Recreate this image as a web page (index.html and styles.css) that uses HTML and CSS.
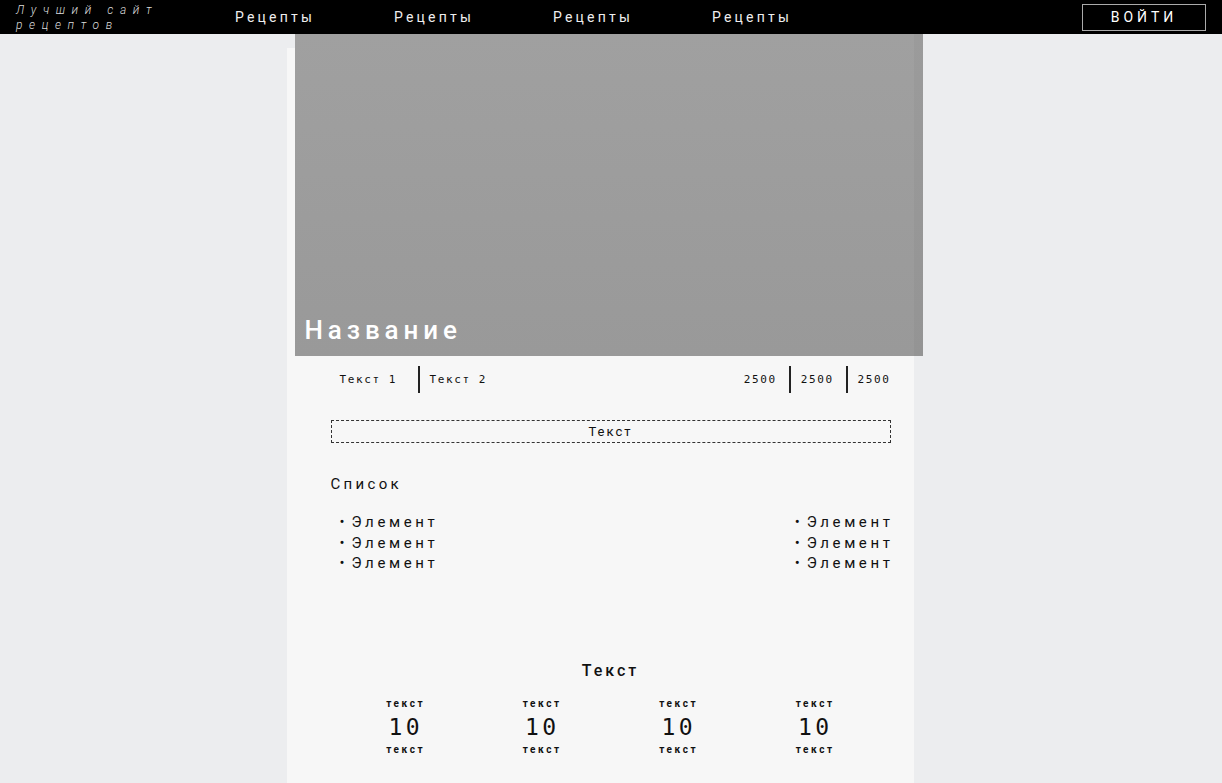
FILE: index.html
```html
<!DOCTYPE html>
<html lang="ru">
<head>
    <meta charset="UTF-8">
    <meta name="viewport" content="width=device-width, initial-scale=1.0">
    <title>Лучший сайт рецептов</title>
    <link rel="stylesheet" href="styles.css">
</head>
<body>
<header class="header">
    <div class="logo">Лучший сайт<br>рецептов</div>
    <nav class="menu">
        <a>Рецепты</a><a>Рецепты</a><a>Рецепты</a><a>Рецепты</a>
    </nav>
    <a class="login">ВОЙТИ</a>
</header>
<main class="card">
    <div class="cover">
        <h1 class="title">Название</h1>
    </div>
    <div class="inner">
        <div class="info">
            <div class="info-group">
                <span class="info-item">Текст 1</span><span class="info-item">Текст 2</span>
            </div>
            <div class="info-group nums">
                <span class="info-item">2500</span><span class="info-item">2500</span><span class="info-item">2500</span>
            </div>
        </div>
        <div class="note">Текст</div>
        <h2 class="list-title">Список</h2>
        <div class="lists">
            <ul class="list">
                <li>Элемент</li>
                <li>Элемент</li>
                <li>Элемент</li>
            </ul>
            <ul class="list">
                <li>Элемент</li>
                <li>Элемент</li>
                <li>Элемент</li>
            </ul>
        </div>
        <h3 class="stats-title">Текст</h3>
        <div class="stats">
            <div class="stat"><span>текст</span><b>10</b><span>текст</span></div>
            <div class="stat"><span>текст</span><b>10</b><span>текст</span></div>
            <div class="stat"><span>текст</span><b>10</b><span>текст</span></div>
            <div class="stat"><span>текст</span><b>10</b><span>текст</span></div>
        </div>
    </div>
</main>
</body>
</html>
```

FILE: styles.css
```css
body {
    margin: 0;
    background: #ecedef;
    font-family: Roboto, "Liberation Sans", sans-serif;
    color: #111;
}
ul {
    margin: 0;
    padding: 0;
    list-style: none;
}
h1, h2, h3 {
    margin: 0;
    font-weight: normal;
}
.header {
    display: flex;
    align-items: center;
    height: 34px;
    background: #000;
    color: #fff;
    padding: 0 16px;
}
.logo {
    width: 219px;
    font-size: 12px;
    line-height: 15px;
    font-style: italic;
    font-weight: 300;
    letter-spacing: 6.6px;
    color: #ddd;
    margin-top: 1px;
}
.menu {
    display: flex;
    flex: 1;
}
.menu a {
    width: 159px;
    font-size: 14px;
    letter-spacing: 3.2px;
    color: #eee;
}
.login {
    width: 122px;
    height: 25px;
    line-height: 25px;
    border: 1px solid #aaa;
    text-align: center;
    font-size: 14px;
    letter-spacing: 4px;
    color: #fff;
}
.card {
    display: flow-root;
    width: 627px;
    min-height: 760px;
    margin: 14px auto 0;
    background: #f7f7f7;
    transform: translateX(-11px);
}
.cover {
    display: flex;
    align-items: flex-end;
    height: 322px;
    margin: -14px -9px 0 8px;
    background: linear-gradient(#a0a0a0, #999);
    box-shadow: inset -9px 0 0 rgba(0, 0, 0, .03);
}
.title {
    padding: 0 0 11px 10px;
    font-size: 26px;
    font-weight: 500;
    letter-spacing: 4.9px;
    color: #fff;
}
.inner {
    padding: 10px 23px 0 44px;
}
.info {
    display: flex;
    justify-content: space-between;
    padding-left: 9px;
}
.info-group {
    display: flex;
    align-items: center;
    height: 27px;
}
.info-item {
    font-family: "DejaVu Sans Mono", monospace;
    font-size: 11px;
    letter-spacing: 1.6px;
    padding-right: 12px;
}
.info-item + .info-item {
    border-left: 2px solid #222;
    padding-left: 10px;
    height: 27px;
    line-height: 27px;
}
.info-group > .info-item:first-child {
    line-height: 27px;
}
.info-group:first-child .info-item:first-child {
    width: 66px;
}
.nums .info-item:last-child {
    padding-right: 0;
}
.note {
    margin-top: 27px;
    height: 21px;
    line-height: 21px;
    border: 1px dashed #333;
    text-align: center;
    font-size: 13px;
    letter-spacing: 2px;
}
.list-title {
    margin-top: 31px;
    font-size: 15px;
    line-height: 20px;
    letter-spacing: 3.3px;
}
.lists {
    display: flex;
    justify-content: space-between;
    margin-top: 18px;
}
.list li {
    font-size: 15px;
    line-height: 20.5px;
    letter-spacing: 3.6px;
}
.list li::before {
    content: "•";
    margin: 0 7px 0 9px;
    letter-spacing: 0;
}
.list:last-child {
    margin-right: -3px;
}
.list:last-child li::before {
    margin-left: 0;
}
.stats-title {
    margin-top: 87px;
    text-align: center;
    font-size: 16px;
    font-weight: 500;
    letter-spacing: 3px;
}
.stats {
    display: grid;
    grid-template-columns: repeat(4, 136.5px);
    justify-content: center;
    margin-top: 17px;
}
.stat {
    display: flex;
    flex-direction: column;
    align-items: center;
}
.stat span {
    font-size: 10px;
    font-weight: 700;
    letter-spacing: 2.6px;
    line-height: 14px;
}
.stat b {
    font-family: "DejaVu Sans Mono", monospace;
    font-size: 23px;
    font-weight: normal;
    letter-spacing: 3.5px;
    line-height: 32px;
}
```
